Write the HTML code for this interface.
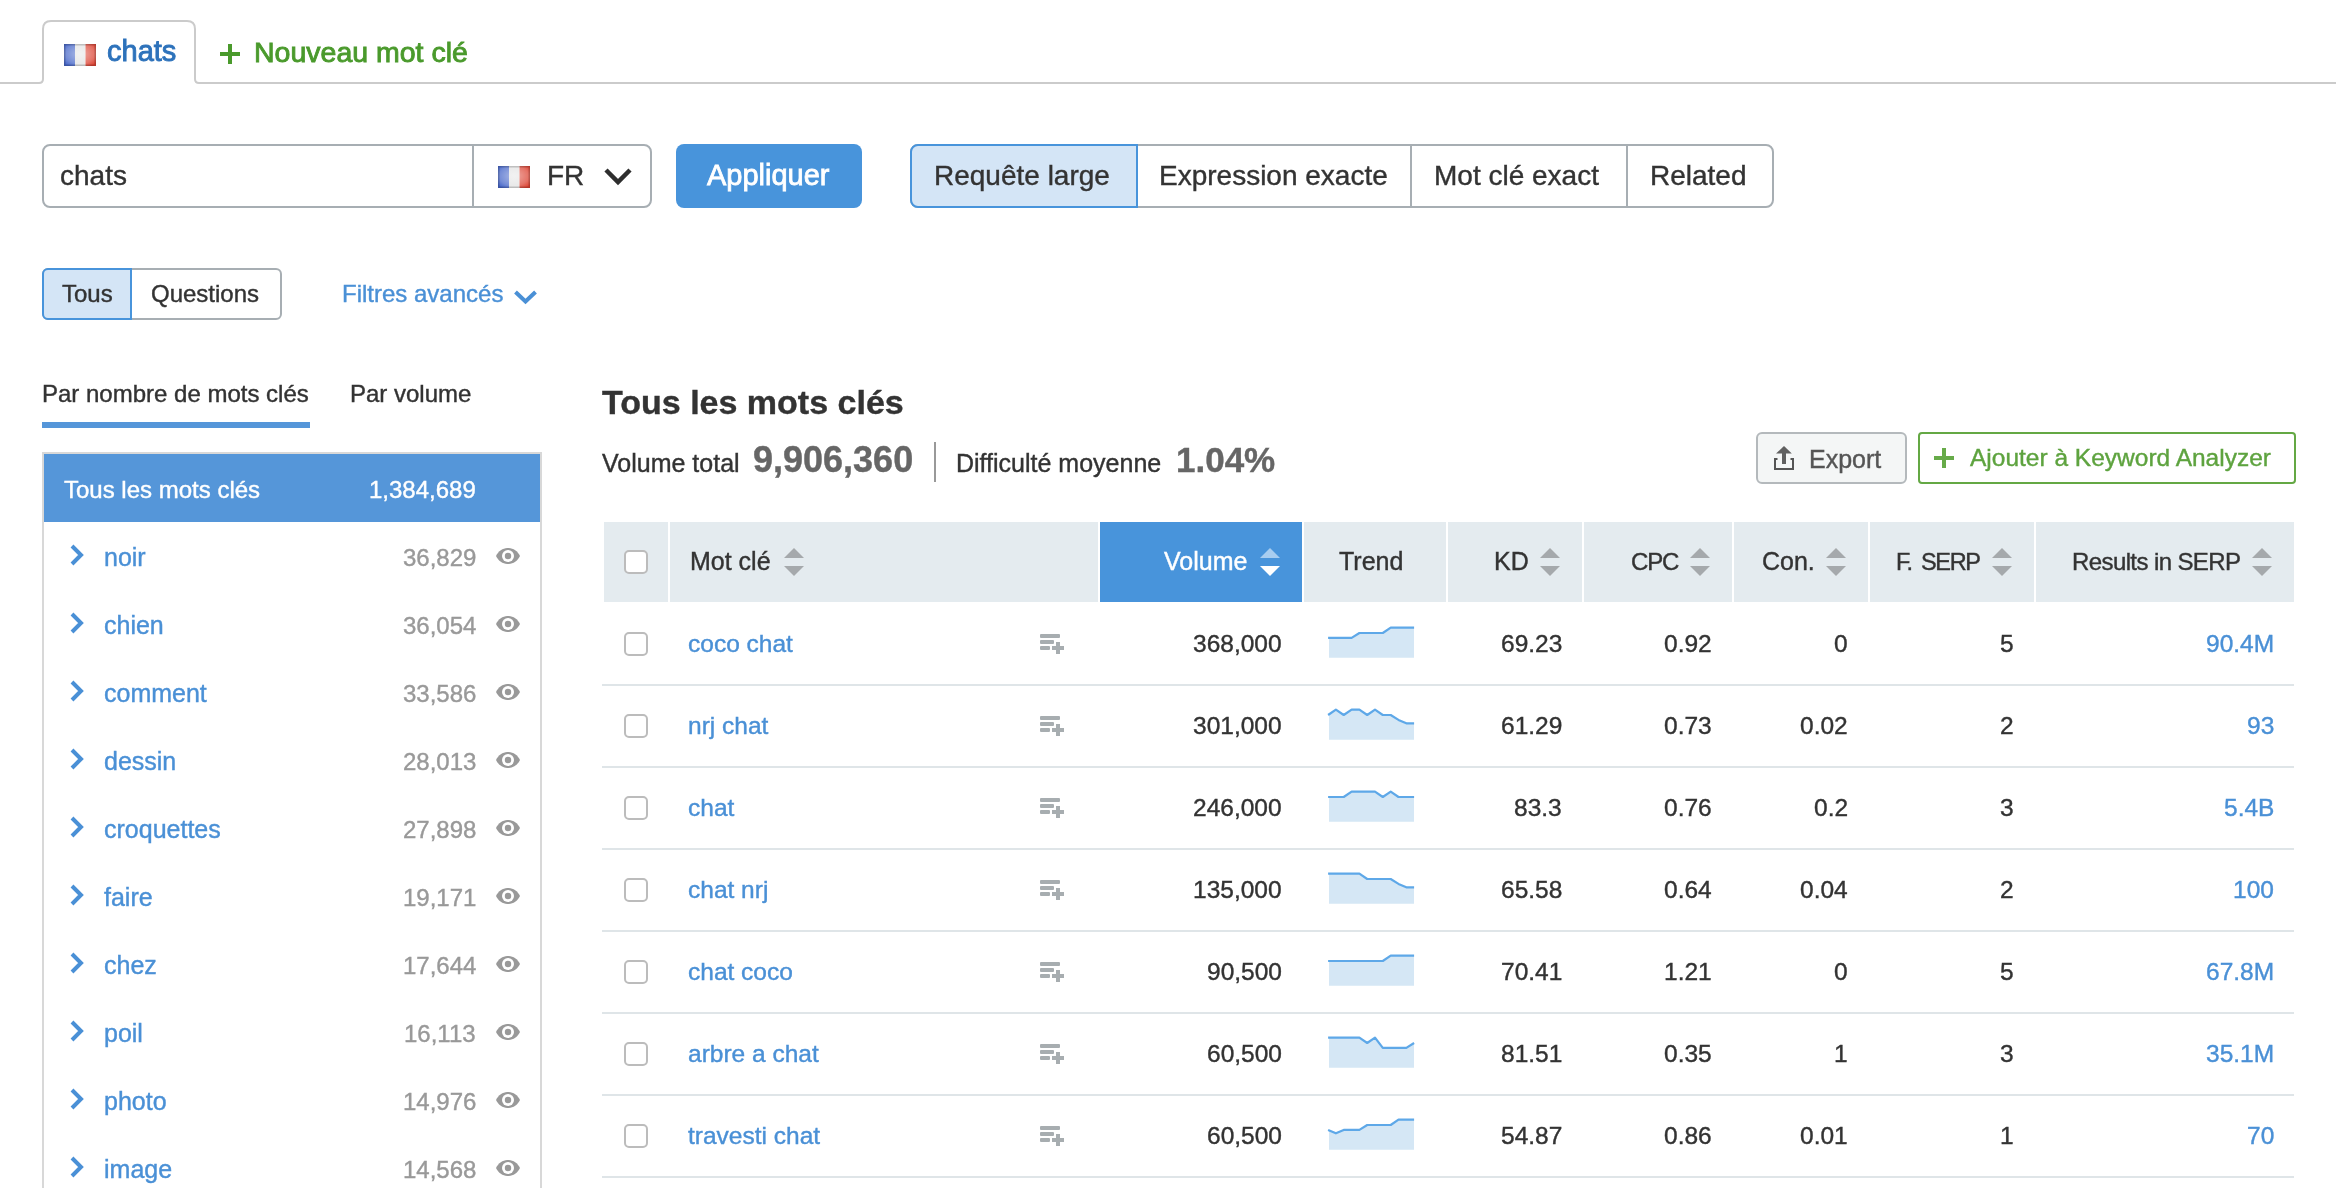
<!DOCTYPE html>
<html><head><meta charset="utf-8"><style>
html,body{margin:0;padding:0;background:#fff;}
body{width:2336px;height:1188px;position:relative;overflow:hidden;font-family:"Liberation Sans", sans-serif;}
.t{position:absolute;white-space:nowrap;will-change:transform;-webkit-text-stroke-width:0.4px;}
.b{position:absolute;display:block;}
</style></head><body>
<div class="b" style="left:0px;top:82px;width:2336px;height:2px;background:#cbcbcb;"></div>
<svg class="b" style="left:36px;top:18px;" width="166" height="68" viewBox="0 0 166 68"><path d="M0,65 L3,65 Q7,65 7,61 L7,11 Q7,3 15,3 L151,3 Q159,3 159,11 L159,61 Q159,65 163,65 L166,65 L166,68 L0,68 Z" fill="#fff"/><path d="M0,65 L3,65 Q7,65 7,61 L7,11 Q7,3 15,3 L151,3 Q159,3 159,11 L159,61 Q159,65 163,65 L166,65" fill="none" stroke="#cbcbcb" stroke-width="2"/></svg>
<svg class="b" style="left:64px;top:44px;" width="32" height="22" viewBox="0 0 32 22"><defs><radialGradient id="fr64" cx="0.5" cy="0.45" r="0.65"><stop offset="0" stop-color="#fff" stop-opacity="0.55"/><stop offset="0.7" stop-color="#fff" stop-opacity="0.25"/><stop offset="1" stop-color="#fff" stop-opacity="0"/></radialGradient></defs><rect x="0" y="0" width="11" height="22" fill="#4767c9"/><rect x="11" y="0" width="10.5" height="22" fill="#e2e2e2"/><rect x="21.5" y="0" width="10.5" height="22" fill="#dc4434"/><rect x="0" y="0" width="32" height="22" fill="url(#fr64)"/><rect x="0.75" y="0.75" width="30.5" height="20.5" fill="none" stroke="#000" stroke-opacity="0.18" stroke-width="1.5"/></svg>
<div class="t" style="top:34.45px;font-size:29px;line-height:35px;color:#2d72bb;left:107px;-webkit-text-stroke:0.9px #2d72bb;">chats</div>
<svg class="b" style="left:218px;top:42px;" width="24" height="24" viewBox="0 0 24 24"><rect x="2" y="10" width="20" height="4" fill="#4a9a2c"/><rect x="10" y="2" width="4" height="20" fill="#4a9a2c"/></svg>
<div class="t" style="top:35.12px;font-size:28.5px;line-height:34px;color:#4a9a2c;left:254px;-webkit-text-stroke:0.9px #4a9a2c;">Nouveau mot clé</div>
<div class="b" style="left:42px;top:144px;width:610px;height:64px;border:2px solid #a7aeb3;border-radius:8px;box-sizing:border-box;background:#fff;"></div>
<div class="b" style="left:472px;top:144px;width:2px;height:64px;background:#a7aeb3;"></div>
<div class="t" style="top:159.30px;font-size:28px;line-height:34px;color:#333333;left:60px;">chats</div>
<svg class="b" style="left:498px;top:166px;" width="32" height="22" viewBox="0 0 32 22"><defs><radialGradient id="fr498" cx="0.5" cy="0.45" r="0.65"><stop offset="0" stop-color="#fff" stop-opacity="0.55"/><stop offset="0.7" stop-color="#fff" stop-opacity="0.25"/><stop offset="1" stop-color="#fff" stop-opacity="0"/></radialGradient></defs><rect x="0" y="0" width="11" height="22" fill="#4767c9"/><rect x="11" y="0" width="10.5" height="22" fill="#e2e2e2"/><rect x="21.5" y="0" width="10.5" height="22" fill="#dc4434"/><rect x="0" y="0" width="32" height="22" fill="url(#fr498)"/><rect x="0.75" y="0.75" width="30.5" height="20.5" fill="none" stroke="#000" stroke-opacity="0.18" stroke-width="1.5"/></svg>
<div class="t" style="top:159.30px;font-size:28px;line-height:34px;color:#333333;left:547px;">FR</div>
<svg class="b" style="left:602px;top:165px;" width="32" height="22" viewBox="0 0 32 22"><polyline points="4,5 16,17 28,5" fill="none" stroke="#2e2e2e" stroke-width="4.5"/></svg>
<div class="b" style="left:676px;top:144px;width:186px;height:64px;background:#4894db;border-radius:8px;"></div>
<div class="t" style="top:158.45px;font-size:29px;line-height:35px;color:#fff;left:707px;-webkit-text-stroke:0.8px #fff;">Appliquer</div>
<div class="b" style="left:910px;top:144px;width:864px;height:64px;border:2px solid #a7aeb3;border-radius:8px;box-sizing:border-box;background:#fff;"></div>
<div class="b" style="left:910px;top:144px;width:228px;height:64px;border:2px solid #4894db;border-radius:8px 0 0 8px;box-sizing:border-box;background:#d4e5f6;"></div>
<div class="b" style="left:1410px;top:144px;width:2px;height:64px;background:#a7aeb3;"></div>
<div class="b" style="left:1626px;top:144px;width:2px;height:64px;background:#a7aeb3;"></div>
<div class="t" style="top:159.30px;font-size:28px;line-height:34px;color:#333333;left:934px;">Requête large</div>
<div class="t" style="top:159.30px;font-size:28px;line-height:34px;color:#333333;left:1159px;">Expression exacte</div>
<div class="t" style="top:159.30px;font-size:28px;line-height:34px;color:#333333;left:1434px;">Mot clé exact</div>
<div class="t" style="top:159.30px;font-size:28px;line-height:34px;color:#333333;left:1650px;">Related</div>
<div class="b" style="left:42px;top:268px;width:240px;height:52px;border:2px solid #a7aeb3;border-radius:6px;box-sizing:border-box;background:#fff;"></div>
<div class="b" style="left:42px;top:268px;width:90px;height:52px;border:2px solid #4894db;border-radius:6px 0 0 6px;box-sizing:border-box;background:#d4e5f6;"></div>
<div class="t" style="top:279.18px;font-size:24px;line-height:29px;color:#333333;left:62px;">Tous</div>
<div class="t" style="top:279.18px;font-size:24px;line-height:29px;color:#333333;left:151px;">Questions</div>
<div class="t" style="top:279.18px;font-size:24px;line-height:29px;color:#4a90d6;left:342px;">Filtres avancés</div>
<svg class="b" style="left:512px;top:287px;" width="26" height="20" viewBox="0 0 26 20"><polyline points="3.5,5 13.5,14.5 23.5,5" fill="none" stroke="#4a90d6" stroke-width="4"/></svg>
<div class="t" style="top:379.18px;font-size:24px;line-height:29px;color:#333333;left:42px;">Par nombre de mots clés</div>
<div class="t" style="top:379.18px;font-size:24px;line-height:29px;color:#333333;left:350px;">Par volume</div>
<div class="b" style="left:42px;top:422px;width:268px;height:6px;background:#5596d9;"></div>
<div class="b" style="left:42px;top:452px;width:500px;height:760px;border:2px solid #d8d8d8;box-sizing:border-box;background:#fff;"></div>
<div class="b" style="left:44px;top:454px;width:496px;height:68px;background:#5596d9;"></div>
<div class="t" style="top:475.18px;font-size:24px;line-height:29px;color:#fff;left:64px;">Tous les mots clés</div>
<div class="t" style="top:475.18px;font-size:24px;line-height:29px;color:#fff;right:1860px;">1,384,689</div>
<svg class="b" style="left:67.5px;top:542.5px;" width="18" height="24" viewBox="0 0 18 24"><polyline points="4,3 13,12 4,21" fill="none" stroke="#4a90d6" stroke-width="4"/></svg>
<div class="t" style="top:542.34px;font-size:25px;line-height:30px;color:#4a90d6;left:104px;">noir</div>
<div class="t" style="top:543.18px;font-size:24px;line-height:29px;color:#999;right:1860px;">36,829</div>
<svg class="b" style="left:496px;top:548px;" width="24" height="16" viewBox="0 0 24 16"><path d="M0,8 C5,-2.7 19,-2.7 24,8 C19,18.7 5,18.7 0,8 Z" fill="#999"/><circle cx="12" cy="8" r="6" fill="#fff"/><circle cx="12" cy="8" r="3.2" fill="#999"/></svg>
<svg class="b" style="left:67.5px;top:610.5px;" width="18" height="24" viewBox="0 0 18 24"><polyline points="4,3 13,12 4,21" fill="none" stroke="#4a90d6" stroke-width="4"/></svg>
<div class="t" style="top:610.34px;font-size:25px;line-height:30px;color:#4a90d6;left:104px;">chien</div>
<div class="t" style="top:611.18px;font-size:24px;line-height:29px;color:#999;right:1860px;">36,054</div>
<svg class="b" style="left:496px;top:616px;" width="24" height="16" viewBox="0 0 24 16"><path d="M0,8 C5,-2.7 19,-2.7 24,8 C19,18.7 5,18.7 0,8 Z" fill="#999"/><circle cx="12" cy="8" r="6" fill="#fff"/><circle cx="12" cy="8" r="3.2" fill="#999"/></svg>
<svg class="b" style="left:67.5px;top:678.5px;" width="18" height="24" viewBox="0 0 18 24"><polyline points="4,3 13,12 4,21" fill="none" stroke="#4a90d6" stroke-width="4"/></svg>
<div class="t" style="top:678.34px;font-size:25px;line-height:30px;color:#4a90d6;left:104px;">comment</div>
<div class="t" style="top:679.18px;font-size:24px;line-height:29px;color:#999;right:1860px;">33,586</div>
<svg class="b" style="left:496px;top:684px;" width="24" height="16" viewBox="0 0 24 16"><path d="M0,8 C5,-2.7 19,-2.7 24,8 C19,18.7 5,18.7 0,8 Z" fill="#999"/><circle cx="12" cy="8" r="6" fill="#fff"/><circle cx="12" cy="8" r="3.2" fill="#999"/></svg>
<svg class="b" style="left:67.5px;top:746.5px;" width="18" height="24" viewBox="0 0 18 24"><polyline points="4,3 13,12 4,21" fill="none" stroke="#4a90d6" stroke-width="4"/></svg>
<div class="t" style="top:746.34px;font-size:25px;line-height:30px;color:#4a90d6;left:104px;">dessin</div>
<div class="t" style="top:747.18px;font-size:24px;line-height:29px;color:#999;right:1860px;">28,013</div>
<svg class="b" style="left:496px;top:752px;" width="24" height="16" viewBox="0 0 24 16"><path d="M0,8 C5,-2.7 19,-2.7 24,8 C19,18.7 5,18.7 0,8 Z" fill="#999"/><circle cx="12" cy="8" r="6" fill="#fff"/><circle cx="12" cy="8" r="3.2" fill="#999"/></svg>
<svg class="b" style="left:67.5px;top:814.5px;" width="18" height="24" viewBox="0 0 18 24"><polyline points="4,3 13,12 4,21" fill="none" stroke="#4a90d6" stroke-width="4"/></svg>
<div class="t" style="top:814.34px;font-size:25px;line-height:30px;color:#4a90d6;left:104px;">croquettes</div>
<div class="t" style="top:815.18px;font-size:24px;line-height:29px;color:#999;right:1860px;">27,898</div>
<svg class="b" style="left:496px;top:820px;" width="24" height="16" viewBox="0 0 24 16"><path d="M0,8 C5,-2.7 19,-2.7 24,8 C19,18.7 5,18.7 0,8 Z" fill="#999"/><circle cx="12" cy="8" r="6" fill="#fff"/><circle cx="12" cy="8" r="3.2" fill="#999"/></svg>
<svg class="b" style="left:67.5px;top:882.5px;" width="18" height="24" viewBox="0 0 18 24"><polyline points="4,3 13,12 4,21" fill="none" stroke="#4a90d6" stroke-width="4"/></svg>
<div class="t" style="top:882.34px;font-size:25px;line-height:30px;color:#4a90d6;left:104px;">faire</div>
<div class="t" style="top:883.18px;font-size:24px;line-height:29px;color:#999;right:1860px;">19,171</div>
<svg class="b" style="left:496px;top:888px;" width="24" height="16" viewBox="0 0 24 16"><path d="M0,8 C5,-2.7 19,-2.7 24,8 C19,18.7 5,18.7 0,8 Z" fill="#999"/><circle cx="12" cy="8" r="6" fill="#fff"/><circle cx="12" cy="8" r="3.2" fill="#999"/></svg>
<svg class="b" style="left:67.5px;top:950.5px;" width="18" height="24" viewBox="0 0 18 24"><polyline points="4,3 13,12 4,21" fill="none" stroke="#4a90d6" stroke-width="4"/></svg>
<div class="t" style="top:950.34px;font-size:25px;line-height:30px;color:#4a90d6;left:104px;">chez</div>
<div class="t" style="top:951.18px;font-size:24px;line-height:29px;color:#999;right:1860px;">17,644</div>
<svg class="b" style="left:496px;top:956px;" width="24" height="16" viewBox="0 0 24 16"><path d="M0,8 C5,-2.7 19,-2.7 24,8 C19,18.7 5,18.7 0,8 Z" fill="#999"/><circle cx="12" cy="8" r="6" fill="#fff"/><circle cx="12" cy="8" r="3.2" fill="#999"/></svg>
<svg class="b" style="left:67.5px;top:1018.5px;" width="18" height="24" viewBox="0 0 18 24"><polyline points="4,3 13,12 4,21" fill="none" stroke="#4a90d6" stroke-width="4"/></svg>
<div class="t" style="top:1018.34px;font-size:25px;line-height:30px;color:#4a90d6;left:104px;">poil</div>
<div class="t" style="top:1019.18px;font-size:24px;line-height:29px;color:#999;right:1860px;">16,113</div>
<svg class="b" style="left:496px;top:1024px;" width="24" height="16" viewBox="0 0 24 16"><path d="M0,8 C5,-2.7 19,-2.7 24,8 C19,18.7 5,18.7 0,8 Z" fill="#999"/><circle cx="12" cy="8" r="6" fill="#fff"/><circle cx="12" cy="8" r="3.2" fill="#999"/></svg>
<svg class="b" style="left:67.5px;top:1086.5px;" width="18" height="24" viewBox="0 0 18 24"><polyline points="4,3 13,12 4,21" fill="none" stroke="#4a90d6" stroke-width="4"/></svg>
<div class="t" style="top:1086.34px;font-size:25px;line-height:30px;color:#4a90d6;left:104px;">photo</div>
<div class="t" style="top:1087.18px;font-size:24px;line-height:29px;color:#999;right:1860px;">14,976</div>
<svg class="b" style="left:496px;top:1092px;" width="24" height="16" viewBox="0 0 24 16"><path d="M0,8 C5,-2.7 19,-2.7 24,8 C19,18.7 5,18.7 0,8 Z" fill="#999"/><circle cx="12" cy="8" r="6" fill="#fff"/><circle cx="12" cy="8" r="3.2" fill="#999"/></svg>
<svg class="b" style="left:67.5px;top:1154.5px;" width="18" height="24" viewBox="0 0 18 24"><polyline points="4,3 13,12 4,21" fill="none" stroke="#4a90d6" stroke-width="4"/></svg>
<div class="t" style="top:1154.34px;font-size:25px;line-height:30px;color:#4a90d6;left:104px;">image</div>
<div class="t" style="top:1155.18px;font-size:24px;line-height:29px;color:#999;right:1860px;">14,568</div>
<svg class="b" style="left:496px;top:1160px;" width="24" height="16" viewBox="0 0 24 16"><path d="M0,8 C5,-2.7 19,-2.7 24,8 C19,18.7 5,18.7 0,8 Z" fill="#999"/><circle cx="12" cy="8" r="6" fill="#fff"/><circle cx="12" cy="8" r="3.2" fill="#999"/></svg>
<div class="t" style="top:381.72px;font-size:34px;line-height:41px;color:#333333;font-weight:bold;left:602px;">Tous les mots clés</div>
<div class="t" style="top:448.34px;font-size:25px;line-height:30px;color:#333333;left:602px;">Volume total</div>
<div class="t" style="top:438.03px;font-size:36px;line-height:43px;color:#666;font-weight:bold;left:753px;">9,906,360</div>
<div class="b" style="left:934px;top:442px;width:2px;height:40px;background:#999;"></div>
<div class="t" style="top:448.34px;font-size:25px;line-height:30px;color:#333333;left:956px;">Difficulté moyenne</div>
<div class="t" style="top:438.87px;font-size:35px;line-height:42px;color:#666;font-weight:bold;left:1176px;">1.04%</div>
<div class="b" style="left:1756px;top:432px;width:151px;height:52px;background:#f4f6f6;border:2px solid #b4b9bc;border-radius:6px;box-sizing:border-box;"></div>
<svg class="b" style="left:1772px;top:444px;" width="24" height="28" viewBox="0 0 24 28"><polygon points="4,9.6 12,1.9 19.8,9.6" fill="#606060"/><rect x="10" y="9" width="4" height="11" fill="#606060"/><polyline points="5.5,15 3,15 3,25 21,25 21,15 18.5,15" fill="none" stroke="#555" stroke-width="2"/></svg>
<div class="t" style="top:444.34px;font-size:25px;line-height:30px;color:#555;left:1809px;">Export</div>
<div class="b" style="left:1918px;top:432px;width:378px;height:52px;background:#fff;border:2px solid #64a844;border-radius:4px;box-sizing:border-box;"></div>
<svg class="b" style="left:1934px;top:448px;" width="20" height="20" viewBox="0 0 20 20"><rect x="0" y="8" width="20" height="4" fill="#67ab49"/><rect x="8" y="0" width="4" height="20" fill="#67ab49"/></svg>
<div class="t" style="top:443.01px;font-size:24.5px;line-height:29px;color:#5ea33f;left:1970px;">Ajouter à Keyword Analyzer</div>
<div class="b" style="left:604px;top:522px;width:64px;height:80px;background:#e4ebef;"></div>
<div class="b" style="left:670px;top:522px;width:428px;height:80px;background:#e4ebef;"></div>
<div class="b" style="left:1100px;top:522px;width:202px;height:80px;background:#e4ebef;"></div>
<div class="b" style="left:1304px;top:522px;width:142px;height:80px;background:#e4ebef;"></div>
<div class="b" style="left:1448px;top:522px;width:134px;height:80px;background:#e4ebef;"></div>
<div class="b" style="left:1584px;top:522px;width:148px;height:80px;background:#e4ebef;"></div>
<div class="b" style="left:1734px;top:522px;width:134px;height:80px;background:#e4ebef;"></div>
<div class="b" style="left:1870px;top:522px;width:164px;height:80px;background:#e4ebef;"></div>
<div class="b" style="left:2036px;top:522px;width:258px;height:80px;background:#e4ebef;"></div>
<div class="b" style="left:1100px;top:522px;width:202px;height:80px;background:#4894db;"></div>
<div class="b" style="left:624px;top:550px;width:24px;height:24px;background:#fff;border:2px solid #bcbcbc;border-radius:5px;box-sizing:border-box;"></div>
<div class="t" style="top:546.34px;font-size:25px;line-height:30px;color:#333333;left:690px;">Mot clé</div>
<svg class="b" style="left:784px;top:548px;" width="20" height="28" viewBox="0 0 20 28"><polygon points="0,10 10,0 20,10" fill="#a5a9ac"/><polygon points="0,18 20,18 10,28" fill="#a5a9ac"/></svg>
<div class="t" style="top:546.34px;font-size:25px;line-height:30px;color:#fff;right:1089px;">Volume</div>
<svg class="b" style="left:1260px;top:548px;" width="20" height="28" viewBox="0 0 20 28"><polygon points="0,10 10,0 20,10" fill="#a8cdf0"/><polygon points="0,18 20,18 10,28" fill="#fff"/></svg>
<div class="t" style="top:546.34px;font-size:25px;line-height:30px;color:#333333;left:1339px;">Trend</div>
<svg class="b" style="left:1540px;top:548px;" width="20" height="28" viewBox="0 0 20 28"><polygon points="0,10 10,0 20,10" fill="#a5a9ac"/><polygon points="0,18 20,18 10,28" fill="#a5a9ac"/></svg>
<div class="t" style="top:546.34px;font-size:25px;line-height:30px;color:#333333;right:807px;letter-spacing:0px;">KD</div>
<svg class="b" style="left:1690px;top:548px;" width="20" height="28" viewBox="0 0 20 28"><polygon points="0,10 10,0 20,10" fill="#a5a9ac"/><polygon points="0,18 20,18 10,28" fill="#a5a9ac"/></svg>
<div class="t" style="top:547.18px;font-size:24px;line-height:29px;color:#333333;right:658.2px;letter-spacing:-1.2px;">CPC</div>
<svg class="b" style="left:1826px;top:548px;" width="20" height="28" viewBox="0 0 20 28"><polygon points="0,10 10,0 20,10" fill="#a5a9ac"/><polygon points="0,18 20,18 10,28" fill="#a5a9ac"/></svg>
<div class="t" style="top:546.34px;font-size:25px;line-height:30px;color:#333333;right:521px;letter-spacing:0px;">Con.</div>
<svg class="b" style="left:1992px;top:548px;" width="20" height="28" viewBox="0 0 20 28"><polygon points="0,10 10,0 20,10" fill="#a5a9ac"/><polygon points="0,18 20,18 10,28" fill="#a5a9ac"/></svg>
<div class="t" style="top:547.86px;font-size:23.5px;line-height:28px;color:#333333;right:356.29999999999995px;letter-spacing:-1.3px;word-spacing:4px;">F. SERP</div>
<svg class="b" style="left:2252px;top:548px;" width="20" height="28" viewBox="0 0 20 28"><polygon points="0,10 10,0 20,10" fill="#a5a9ac"/><polygon points="0,18 20,18 10,28" fill="#a5a9ac"/></svg>
<div class="t" style="top:547.18px;font-size:24px;line-height:29px;color:#333333;right:95.59999999999991px;letter-spacing:-0.6px;">Results in SERP</div>
<div class="b" style="left:602px;top:684px;width:1692px;height:2px;background:#dfe5e8;"></div>
<div class="b" style="left:624px;top:632px;width:24px;height:24px;background:#fff;border:2px solid #bcbcbc;border-radius:5px;box-sizing:border-box;"></div>
<div class="t" style="top:628.51px;font-size:24.5px;line-height:29px;color:#4a90d6;left:688px;">coco chat</div>
<svg class="b" style="left:1040px;top:634px;" width="24" height="20" viewBox="0 0 24 20"><rect x="0" y="0" width="20" height="4" rx="1" fill="#a7adb0"/><rect x="0" y="6" width="14" height="4" rx="1" fill="#a7adb0"/><rect x="0" y="12" width="10" height="4" rx="1" fill="#a7adb0"/><rect x="12" y="12" width="12" height="4" fill="#a7adb0"/><rect x="16" y="8" width="4" height="12" fill="#a7adb0"/></svg>
<div class="t" style="top:629.01px;font-size:24.5px;line-height:29px;color:#333333;right:1054px;">368,000</div>
<svg class="b" style="left:1320px;top:615px;" width="100" height="50" viewBox="0 0 100 50"><polygon points="9,42.8 9.0,22.9 15.9,22.9 23.7,22.9 31.6,22.9 39.4,18.0 47.2,18.0 55.0,18.0 62.8,18.0 70.7,12.6 78.5,12.6 86.3,12.6 94.0,12.6 94,42.8" fill="#d5e7f5"/><polyline points="8.1,22.9 15.9,22.9 23.7,22.9 31.6,22.9 39.4,18.0 47.2,18.0 55.0,18.0 62.8,18.0 70.7,12.6 78.5,12.6 86.3,12.6 94.1,12.6" fill="none" stroke="#5ea8e8" stroke-width="2.2" stroke-linejoin="round"/></svg>
<div class="t" style="top:629.01px;font-size:24.5px;line-height:29px;color:#333333;right:774px;">69.23</div>
<div class="t" style="top:629.01px;font-size:24.5px;line-height:29px;color:#333333;right:624px;">0.92</div>
<div class="t" style="top:629.01px;font-size:24.5px;line-height:29px;color:#333333;right:488px;">0</div>
<div class="t" style="top:629.01px;font-size:24.5px;line-height:29px;color:#333333;right:322px;">5</div>
<div class="t" style="top:629.01px;font-size:24.5px;line-height:29px;color:#4a90d6;right:62px;">90.4M</div>
<div class="b" style="left:602px;top:766px;width:1692px;height:2px;background:#dfe5e8;"></div>
<div class="b" style="left:624px;top:714px;width:24px;height:24px;background:#fff;border:2px solid #bcbcbc;border-radius:5px;box-sizing:border-box;"></div>
<div class="t" style="top:710.51px;font-size:24.5px;line-height:29px;color:#4a90d6;left:688px;">nrj chat</div>
<svg class="b" style="left:1040px;top:716px;" width="24" height="20" viewBox="0 0 24 20"><rect x="0" y="0" width="20" height="4" rx="1" fill="#a7adb0"/><rect x="0" y="6" width="14" height="4" rx="1" fill="#a7adb0"/><rect x="0" y="12" width="10" height="4" rx="1" fill="#a7adb0"/><rect x="12" y="12" width="12" height="4" fill="#a7adb0"/><rect x="16" y="8" width="4" height="12" fill="#a7adb0"/></svg>
<div class="t" style="top:711.01px;font-size:24.5px;line-height:29px;color:#333333;right:1054px;">301,000</div>
<svg class="b" style="left:1320px;top:697px;" width="100" height="50" viewBox="0 0 100 50"><polygon points="9,42.8 9.0,18.0 15.9,12.6 23.7,18.0 31.6,12.6 39.4,12.6 47.2,18.0 55.0,12.6 62.8,18.0 70.7,18.0 78.5,22.9 86.3,26.3 94.0,26.3 94,42.8" fill="#d5e7f5"/><polyline points="8.1,18.0 15.9,12.6 23.7,18.0 31.6,12.6 39.4,12.6 47.2,18.0 55.0,12.6 62.8,18.0 70.7,18.0 78.5,22.9 86.3,26.3 94.1,26.3" fill="none" stroke="#5ea8e8" stroke-width="2.2" stroke-linejoin="round"/></svg>
<div class="t" style="top:711.01px;font-size:24.5px;line-height:29px;color:#333333;right:774px;">61.29</div>
<div class="t" style="top:711.01px;font-size:24.5px;line-height:29px;color:#333333;right:624px;">0.73</div>
<div class="t" style="top:711.01px;font-size:24.5px;line-height:29px;color:#333333;right:488px;">0.02</div>
<div class="t" style="top:711.01px;font-size:24.5px;line-height:29px;color:#333333;right:322px;">2</div>
<div class="t" style="top:711.01px;font-size:24.5px;line-height:29px;color:#4a90d6;right:62px;">93</div>
<div class="b" style="left:602px;top:848px;width:1692px;height:2px;background:#dfe5e8;"></div>
<div class="b" style="left:624px;top:796px;width:24px;height:24px;background:#fff;border:2px solid #bcbcbc;border-radius:5px;box-sizing:border-box;"></div>
<div class="t" style="top:792.51px;font-size:24.5px;line-height:29px;color:#4a90d6;left:688px;">chat</div>
<svg class="b" style="left:1040px;top:798px;" width="24" height="20" viewBox="0 0 24 20"><rect x="0" y="0" width="20" height="4" rx="1" fill="#a7adb0"/><rect x="0" y="6" width="14" height="4" rx="1" fill="#a7adb0"/><rect x="0" y="12" width="10" height="4" rx="1" fill="#a7adb0"/><rect x="12" y="12" width="12" height="4" fill="#a7adb0"/><rect x="16" y="8" width="4" height="12" fill="#a7adb0"/></svg>
<div class="t" style="top:793.01px;font-size:24.5px;line-height:29px;color:#333333;right:1054px;">246,000</div>
<svg class="b" style="left:1320px;top:779px;" width="100" height="50" viewBox="0 0 100 50"><polygon points="9,42.8 9.0,18.0 15.9,18.0 23.7,18.0 31.6,12.6 39.4,12.6 47.2,12.6 55.0,12.6 62.8,18.0 70.7,12.6 78.5,18.0 86.3,18.0 94.0,18.0 94,42.8" fill="#d5e7f5"/><polyline points="8.1,18.0 15.9,18.0 23.7,18.0 31.6,12.6 39.4,12.6 47.2,12.6 55.0,12.6 62.8,18.0 70.7,12.6 78.5,18.0 86.3,18.0 94.1,18.0" fill="none" stroke="#5ea8e8" stroke-width="2.2" stroke-linejoin="round"/></svg>
<div class="t" style="top:793.01px;font-size:24.5px;line-height:29px;color:#333333;right:774px;">83.3</div>
<div class="t" style="top:793.01px;font-size:24.5px;line-height:29px;color:#333333;right:624px;">0.76</div>
<div class="t" style="top:793.01px;font-size:24.5px;line-height:29px;color:#333333;right:488px;">0.2</div>
<div class="t" style="top:793.01px;font-size:24.5px;line-height:29px;color:#333333;right:322px;">3</div>
<div class="t" style="top:793.01px;font-size:24.5px;line-height:29px;color:#4a90d6;right:62px;">5.4B</div>
<div class="b" style="left:602px;top:930px;width:1692px;height:2px;background:#dfe5e8;"></div>
<div class="b" style="left:624px;top:878px;width:24px;height:24px;background:#fff;border:2px solid #bcbcbc;border-radius:5px;box-sizing:border-box;"></div>
<div class="t" style="top:874.51px;font-size:24.5px;line-height:29px;color:#4a90d6;left:688px;">chat nrj</div>
<svg class="b" style="left:1040px;top:880px;" width="24" height="20" viewBox="0 0 24 20"><rect x="0" y="0" width="20" height="4" rx="1" fill="#a7adb0"/><rect x="0" y="6" width="14" height="4" rx="1" fill="#a7adb0"/><rect x="0" y="12" width="10" height="4" rx="1" fill="#a7adb0"/><rect x="12" y="12" width="12" height="4" fill="#a7adb0"/><rect x="16" y="8" width="4" height="12" fill="#a7adb0"/></svg>
<div class="t" style="top:875.01px;font-size:24.5px;line-height:29px;color:#333333;right:1054px;">135,000</div>
<svg class="b" style="left:1320px;top:861px;" width="100" height="50" viewBox="0 0 100 50"><polygon points="9,42.8 9.0,12.6 15.9,12.6 23.7,12.6 31.6,12.6 39.4,12.6 47.2,18.0 55.0,18.0 62.8,18.0 70.7,18.0 78.5,22.9 86.3,26.3 94.0,26.3 94,42.8" fill="#d5e7f5"/><polyline points="8.1,12.6 15.9,12.6 23.7,12.6 31.6,12.6 39.4,12.6 47.2,18.0 55.0,18.0 62.8,18.0 70.7,18.0 78.5,22.9 86.3,26.3 94.1,26.3" fill="none" stroke="#5ea8e8" stroke-width="2.2" stroke-linejoin="round"/></svg>
<div class="t" style="top:875.01px;font-size:24.5px;line-height:29px;color:#333333;right:774px;">65.58</div>
<div class="t" style="top:875.01px;font-size:24.5px;line-height:29px;color:#333333;right:624px;">0.64</div>
<div class="t" style="top:875.01px;font-size:24.5px;line-height:29px;color:#333333;right:488px;">0.04</div>
<div class="t" style="top:875.01px;font-size:24.5px;line-height:29px;color:#333333;right:322px;">2</div>
<div class="t" style="top:875.01px;font-size:24.5px;line-height:29px;color:#4a90d6;right:62px;">100</div>
<div class="b" style="left:602px;top:1012px;width:1692px;height:2px;background:#dfe5e8;"></div>
<div class="b" style="left:624px;top:960px;width:24px;height:24px;background:#fff;border:2px solid #bcbcbc;border-radius:5px;box-sizing:border-box;"></div>
<div class="t" style="top:956.51px;font-size:24.5px;line-height:29px;color:#4a90d6;left:688px;">chat coco</div>
<svg class="b" style="left:1040px;top:962px;" width="24" height="20" viewBox="0 0 24 20"><rect x="0" y="0" width="20" height="4" rx="1" fill="#a7adb0"/><rect x="0" y="6" width="14" height="4" rx="1" fill="#a7adb0"/><rect x="0" y="12" width="10" height="4" rx="1" fill="#a7adb0"/><rect x="12" y="12" width="12" height="4" fill="#a7adb0"/><rect x="16" y="8" width="4" height="12" fill="#a7adb0"/></svg>
<div class="t" style="top:957.01px;font-size:24.5px;line-height:29px;color:#333333;right:1054px;">90,500</div>
<svg class="b" style="left:1320px;top:943px;" width="100" height="50" viewBox="0 0 100 50"><polygon points="9,42.8 9.0,18.0 15.9,18.0 23.7,18.0 31.6,18.0 39.4,18.0 47.2,18.0 55.0,18.0 62.8,18.0 70.7,12.6 78.5,12.6 86.3,12.6 94.0,12.6 94,42.8" fill="#d5e7f5"/><polyline points="8.1,18.0 15.9,18.0 23.7,18.0 31.6,18.0 39.4,18.0 47.2,18.0 55.0,18.0 62.8,18.0 70.7,12.6 78.5,12.6 86.3,12.6 94.1,12.6" fill="none" stroke="#5ea8e8" stroke-width="2.2" stroke-linejoin="round"/></svg>
<div class="t" style="top:957.01px;font-size:24.5px;line-height:29px;color:#333333;right:774px;">70.41</div>
<div class="t" style="top:957.01px;font-size:24.5px;line-height:29px;color:#333333;right:624px;">1.21</div>
<div class="t" style="top:957.01px;font-size:24.5px;line-height:29px;color:#333333;right:488px;">0</div>
<div class="t" style="top:957.01px;font-size:24.5px;line-height:29px;color:#333333;right:322px;">5</div>
<div class="t" style="top:957.01px;font-size:24.5px;line-height:29px;color:#4a90d6;right:62px;">67.8M</div>
<div class="b" style="left:602px;top:1094px;width:1692px;height:2px;background:#dfe5e8;"></div>
<div class="b" style="left:624px;top:1042px;width:24px;height:24px;background:#fff;border:2px solid #bcbcbc;border-radius:5px;box-sizing:border-box;"></div>
<div class="t" style="top:1038.51px;font-size:24.5px;line-height:29px;color:#4a90d6;left:688px;">arbre a chat</div>
<svg class="b" style="left:1040px;top:1044px;" width="24" height="20" viewBox="0 0 24 20"><rect x="0" y="0" width="20" height="4" rx="1" fill="#a7adb0"/><rect x="0" y="6" width="14" height="4" rx="1" fill="#a7adb0"/><rect x="0" y="12" width="10" height="4" rx="1" fill="#a7adb0"/><rect x="12" y="12" width="12" height="4" fill="#a7adb0"/><rect x="16" y="8" width="4" height="12" fill="#a7adb0"/></svg>
<div class="t" style="top:1039.01px;font-size:24.5px;line-height:29px;color:#333333;right:1054px;">60,500</div>
<svg class="b" style="left:1320px;top:1025px;" width="100" height="50" viewBox="0 0 100 50"><polygon points="9,42.8 9.0,12.6 15.9,12.6 23.7,12.6 31.6,12.6 39.4,12.6 47.2,18.0 55.0,12.6 62.8,22.9 70.7,22.9 78.5,22.9 86.3,22.9 94.0,18.0 94,42.8" fill="#d5e7f5"/><polyline points="8.1,12.6 15.9,12.6 23.7,12.6 31.6,12.6 39.4,12.6 47.2,18.0 55.0,12.6 62.8,22.9 70.7,22.9 78.5,22.9 86.3,22.9 94.1,18.0" fill="none" stroke="#5ea8e8" stroke-width="2.2" stroke-linejoin="round"/></svg>
<div class="t" style="top:1039.01px;font-size:24.5px;line-height:29px;color:#333333;right:774px;">81.51</div>
<div class="t" style="top:1039.01px;font-size:24.5px;line-height:29px;color:#333333;right:624px;">0.35</div>
<div class="t" style="top:1039.01px;font-size:24.5px;line-height:29px;color:#333333;right:488px;">1</div>
<div class="t" style="top:1039.01px;font-size:24.5px;line-height:29px;color:#333333;right:322px;">3</div>
<div class="t" style="top:1039.01px;font-size:24.5px;line-height:29px;color:#4a90d6;right:62px;">35.1M</div>
<div class="b" style="left:602px;top:1176px;width:1692px;height:2px;background:#dfe5e8;"></div>
<div class="b" style="left:624px;top:1124px;width:24px;height:24px;background:#fff;border:2px solid #bcbcbc;border-radius:5px;box-sizing:border-box;"></div>
<div class="t" style="top:1120.51px;font-size:24.5px;line-height:29px;color:#4a90d6;left:688px;">travesti chat</div>
<svg class="b" style="left:1040px;top:1126px;" width="24" height="20" viewBox="0 0 24 20"><rect x="0" y="0" width="20" height="4" rx="1" fill="#a7adb0"/><rect x="0" y="6" width="14" height="4" rx="1" fill="#a7adb0"/><rect x="0" y="12" width="10" height="4" rx="1" fill="#a7adb0"/><rect x="12" y="12" width="12" height="4" fill="#a7adb0"/><rect x="16" y="8" width="4" height="12" fill="#a7adb0"/></svg>
<div class="t" style="top:1121.01px;font-size:24.5px;line-height:29px;color:#333333;right:1054px;">60,500</div>
<svg class="b" style="left:1320px;top:1107px;" width="100" height="50" viewBox="0 0 100 50"><polygon points="9,42.8 9.0,22.9 15.9,26.3 23.7,22.9 31.6,22.9 39.4,22.9 47.2,18.0 55.0,18.0 62.8,18.0 70.7,18.0 78.5,12.6 86.3,12.6 94.0,12.6 94,42.8" fill="#d5e7f5"/><polyline points="8.1,22.9 15.9,26.3 23.7,22.9 31.6,22.9 39.4,22.9 47.2,18.0 55.0,18.0 62.8,18.0 70.7,18.0 78.5,12.6 86.3,12.6 94.1,12.6" fill="none" stroke="#5ea8e8" stroke-width="2.2" stroke-linejoin="round"/></svg>
<div class="t" style="top:1121.01px;font-size:24.5px;line-height:29px;color:#333333;right:774px;">54.87</div>
<div class="t" style="top:1121.01px;font-size:24.5px;line-height:29px;color:#333333;right:624px;">0.86</div>
<div class="t" style="top:1121.01px;font-size:24.5px;line-height:29px;color:#333333;right:488px;">0.01</div>
<div class="t" style="top:1121.01px;font-size:24.5px;line-height:29px;color:#333333;right:322px;">1</div>
<div class="t" style="top:1121.01px;font-size:24.5px;line-height:29px;color:#4a90d6;right:62px;">70</div>
</body></html>
